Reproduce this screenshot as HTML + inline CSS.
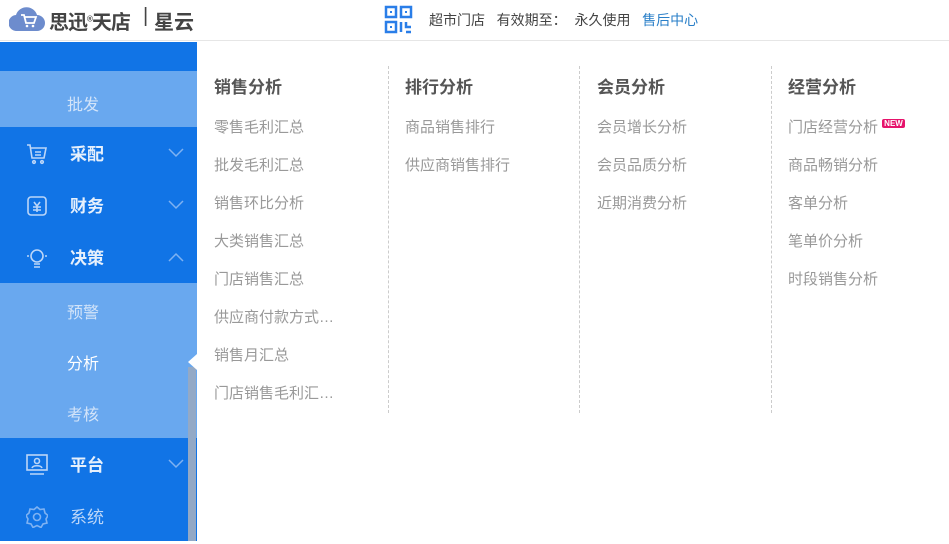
<!DOCTYPE html><html><head><meta charset="utf-8"><style>
*{margin:0;padding:0;box-sizing:border-box}
body{width:949px;height:541px;overflow:hidden;background:#fff;font-family:"Liberation Sans","Noto Sans CJK SC",sans-serif;position:relative}
.hdr{position:absolute;left:0;top:0;width:949px;height:41px;border-bottom:1px solid #e6e6e6;background:#fff}
.side{position:absolute;left:0;top:42px;width:197px;height:499px;background:#1174e6}
.sub{position:absolute;left:0;width:197px;background:#69a8ef}
.it{position:absolute;left:0;width:197px;height:52px;line-height:52px;color:#e6f0fc;font-size:17px;font-weight:bold}
.it span{position:absolute;left:70px;top:1px}
.it svg{position:absolute;left:26px;top:15px}
.si{position:absolute;left:67px;font-size:16px;color:#d3e4f9}
.col{position:absolute;top:73px}
.col h{display:block;font-size:17px;font-weight:bold;color:#555;height:24px}
.col div{font-size:15px;color:#999;height:38px;line-height:38px}
.col .l{margin-top:12px}
.dv{position:absolute;top:66px;height:347px;border-left:1px dashed #ccc}
</style></head><body>
<div class="hdr">
 <svg style="position:absolute;left:9px;top:5px" width="36" height="26" viewBox="0 0 36 26"><path d="M8 26a8 8 0 0 1-1-16 11 11 0 0 1 21 0 8 8 0 0 1 0 16z" fill="#6d8ccd"/><path d="M12 10h3l2 8h8l2-6H16" stroke="#fff" stroke-width="1.8" fill="none"/><circle cx="18" cy="21" r="1.3" fill="#fff"/><circle cx="24" cy="21" r="1.3" fill="#fff"/></svg>
 <div style="position:absolute;left:49px;top:6px;font-size:20px;font-weight:bold;color:#444;letter-spacing:-1px">思迅<sup style="font-size:8px">®</sup>天店</div>
 <div style="position:absolute;left:143px;top:5px;font-size:20px;color:#444">|</div>
 <div style="position:absolute;left:154px;top:6px;font-size:20px;font-weight:bold;color:#444">星云</div>
 <svg style="position:absolute;left:384px;top:5px" width="29" height="29" viewBox="0 0 29 29" fill="none" stroke="#2a7ee8" stroke-width="2.5"><rect x="2" y="2" width="10" height="10"/><rect x="17" y="2" width="10" height="10"/><rect x="2" y="17" width="10" height="10"/><path d="M17 17v10M22 17v5h5M22 27h5"/><rect x="6" y="6" width="2" height="2" fill="#2a7ee8" stroke="none"/><rect x="21" y="6" width="2" height="2" fill="#2a7ee8" stroke="none"/><rect x="6" y="21" width="2" height="2" fill="#2a7ee8" stroke="none"/></svg>
 <div style="position:absolute;left:429px;top:10px;font-size:14px;color:#444">超市门店&nbsp;&nbsp;&nbsp;有效期至：&nbsp;&nbsp;永久使用&nbsp;&nbsp;&nbsp;<span style="color:#2a7fc8">售后中心</span></div>
</div>
<div class="side">
 <div class="sub" style="top:29px;height:56px"></div>
 <div class="si" style="top:49px">批发</div>
 <div class="it" style="top:86px"><svg width="22" height="22" viewBox="0 0 22 22" fill="none" stroke="#bcd6f8" stroke-width="1.6"><path d="M1 2h3l2 13h12l2-10H5"/><path d="M9 9h6M9 12h6"/><circle cx="8" cy="19" r="1.3"/><circle cx="16" cy="19" r="1.3"/></svg><span>采配</span><svg width="16" height="10" viewBox="0 0 16 10" fill="none" stroke="#7fb2f2" stroke-width="1.5" style="left:168px;top:20px"><path d="M1 1l7 7 7-7"/></svg></div>
 <div class="it" style="top:138px"><svg width="22" height="22" viewBox="0 0 22 22" fill="none" stroke="#bcd6f8" stroke-width="1.6"><rect x="2" y="2" width="18" height="18" rx="3"/><path d="M8 7l3 4 3-4M7 12h8M7 15h8M11 11v6"/></svg><span>财务</span><svg width="16" height="10" viewBox="0 0 16 10" fill="none" stroke="#7fb2f2" stroke-width="1.5" style="left:168px;top:20px"><path d="M1 1l7 7 7-7"/></svg></div>
 <div class="it" style="top:190px"><svg width="22" height="24" viewBox="0 0 22 24" fill="none" stroke="#bcd6f8" stroke-width="1.6"><circle cx="11" cy="9" r="6"/><path d="M8 17h6M8 20h6M1 9h2M19 9h2"/></svg><span>决策</span><svg width="16" height="10" viewBox="0 0 16 10" fill="none" stroke="#7fb2f2" stroke-width="1.5" style="left:168px;top:20px"><path d="M1 9l7-7 7 7"/></svg></div>
 <div class="sub" style="top:241px;height:155px"></div>
 <div class="si" style="top:257px">预警</div>
 <div class="si" style="top:308px;color:#fff">分析</div>
 <div class="si" style="top:359px">考核</div>
 <div class="it" style="top:397px"><svg width="22" height="22" viewBox="0 0 22 22" fill="none" stroke="#bcd6f8" stroke-width="1.6"><rect x="1" y="1" width="20" height="15"/><circle cx="11" cy="7" r="2.5"/><path d="M6 14c1-3 9-3 10 0M4 20h14"/></svg><span>平台</span><svg width="16" height="10" viewBox="0 0 16 10" fill="none" stroke="#7fb2f2" stroke-width="1.5" style="left:168px;top:20px"><path d="M1 1l7 7 7-7"/></svg></div>
 <div class="it" style="top:449px;font-weight:normal;color:#bcd6f8"><svg width="22" height="22" viewBox="0 0 22 22" fill="none" stroke="#7fb2f2" stroke-width="1.6"><path d="M11 1l3 2.5 4-.5 1 4 3 2.5-2 3.5 1 4-4 1-2 3.5-4-2-4 2-2-3.5-4-1 1-4-2-3.5 3-2.5 1-4 4 .5z"/><circle cx="11" cy="11" r="3.5"/></svg><span>系统</span></div>
 <div style="position:absolute;left:188px;top:325px;width:8px;height:174px;background:#93a9c6"></div>
 <div style="position:absolute;left:188px;top:312px;width:0;height:0;border-top:8px solid transparent;border-bottom:8px solid transparent;border-right:9px solid #fff"></div>
</div>
<div class="dv" style="left:388px"></div><div class="dv" style="left:579px"></div><div class="dv" style="left:771px"></div>
<div class="col" style="left:214px"><h>销售分析</h><div class="l">零售毛利汇总</div><div>批发毛利汇总</div><div>销售环比分析</div><div>大类销售汇总</div><div>门店销售汇总</div><div>供应商付款方式…</div><div>销售月汇总</div><div>门店销售毛利汇…</div></div>
<div class="col" style="left:405px"><h>排行分析</h><div class="l">商品销售排行</div><div>供应商销售排行</div></div>
<div class="col" style="left:597px"><h>会员分析</h><div class="l">会员增长分析</div><div>会员品质分析</div><div>近期消费分析</div></div>
<div class="col" style="left:788px"><h>经营分析</h><div class="l">门店经营分析 <span style="display:inline-block;vertical-align:6px;background:#e6136b;color:#fff;font-size:8px;font-weight:bold;line-height:9px;padding:0 2px;border-radius:2px">NEW</span></div><div>商品畅销分析</div><div>客单分析</div><div>笔单价分析</div><div>时段销售分析</div></div>
</body></html>
